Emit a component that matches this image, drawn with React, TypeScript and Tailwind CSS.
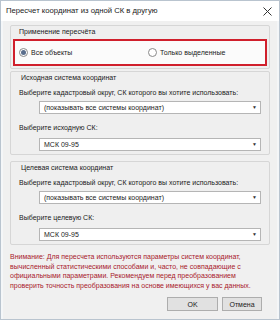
import React from "react";

function Combo({ value }: { value: string }) {
  return (
    <div className="ml-[20px] mr-[8px] flex h-[13px] items-center justify-between border border-[#b5b5b5] bg-white pl-[4px] pr-[3px]">
      <span className="leading-none">{value}</span>
      <span className="text-[5px] leading-none text-[#333]">▼</span>
    </div>
  );
}

function Radio({ label, checked }: { label: string; checked?: boolean }) {
  return (
    <label className="flex items-center gap-[3px]">
      <span className="flex size-[9px] items-center justify-center rounded-full border border-[#8a8a8a] bg-white">
        {checked && <span className="size-[5px] rounded-full bg-[#5a6e8c]" />}
      </span>
      <span className="leading-none">{label}</span>
    </label>
  );
}

function CoordGroup({ title, pick }: { title: string; pick: string }) {
  return (
    <div className="flex h-[84px] flex-col rounded-[2px] border border-[#d6d6d6] bg-[#efefef] pl-[8px]">
      <div className="mt-[1px] h-[10px] pl-[2px] leading-[10px]">{title}</div>
      <div className="mt-[5px] leading-[10px]">Выберите кадастровый округ, СК которого вы хотите использовать:</div>
      <div className="mt-[3px]">
        <Combo value="(показывать все системы координат)" />
      </div>
      <div className="mt-[9px] leading-[10px]">{pick}</div>
      <div className="mt-[5px]">
        <Combo value="МСК 09-95" />
      </div>
    </div>
  );
}

export default function App() {
  return (
    <div
      className="flex h-[320px] w-[280px] flex-col overflow-hidden border border-[#b9c4cf] bg-[#f0f0f0] text-[7px] text-[#1a1a1a]"
      style={{ fontFamily: '"Liberation Sans", Arial, sans-serif' }}
    >
      {/* title bar */}
      <div className="flex h-[20px] shrink-0 items-center justify-between bg-white pl-[5px] pr-[7px]">
        <span className="text-[7.7px] leading-none">Пересчет координат из одной СК в другую</span>
        <svg width="9" height="9" viewBox="0 0 9 9" stroke="#333" strokeWidth="1">
          <path d="M0.5 0.5 L8.5 8.5 M8.5 0.5 L0.5 8.5" />
        </svg>
      </div>

      <div className="flex flex-1 flex-col border-x-[2px] border-[#f4f6f8] px-[7px] pt-[4px]">
        {/* group 1 */}
        <div className="flex h-[44px] flex-col rounded-[2px] border border-[#d6d6d6] bg-[#efefef] px-[2px]">
          <div className="mt-[1px] h-[10px] pl-[6px] leading-[10px]">Применение пересчёта</div>
          <div className="mt-[2px] flex h-[27px] items-center border-2 border-[#d01f2c] bg-[#fbfbfb] pl-[4px]">
            <div className="w-[129px]">
              <Radio label="Все объекты" checked />
            </div>
            <Radio label="Только выделенные" />
          </div>
        </div>

        <div className="mt-[2px]">
          <CoordGroup title="Исходная система координат" pick="Выберите исходную СК:" />
        </div>
        <div className="mt-[6px]">
          <CoordGroup title="Целевая система координат" pick="Выберите целевую СК:" />
        </div>

        <p className="mt-[7px] leading-[9.5px] text-[#a8202c]">
          Внимание: Для пересчета используются параметры систем координат, вычисленный статистическими способами и, часто, не совпадающие с официальными параметрами. Рекомендуем перед преобразованием проверить точность преобразования на основе имеющихся у вас данных.
        </p>

        <div className="mt-auto mb-[8px] flex justify-end gap-[4px] pr-[8px]">
          <button className="h-[14px] w-[51px] border border-[#adadad] bg-[#e1e1e1] leading-none">OK</button>
          <button className="h-[14px] w-[40px] border border-[#adadad] bg-[#e1e1e1] leading-none">Отмена</button>
        </div>
      </div>
    </div>
  );
}
